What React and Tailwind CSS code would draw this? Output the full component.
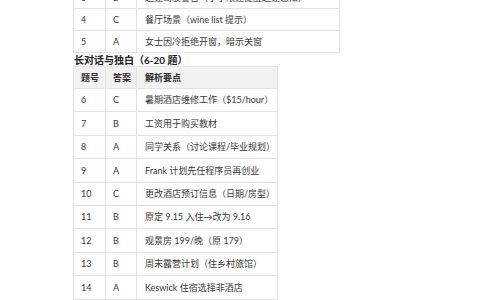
import React from 'react';

const topRows = [
  ['3', 'B', '超速驾驶警告（小于限速提醒超速感知）'],
  ['4', 'C', '餐厅场景（wine list 提示）'],
  ['5', 'A', '女士因冷拒绝开窗，暗示关窗'],
];

const longRows = [
  ['6', 'C', '暑期酒店维修工作（$15/hour）'],
  ['7', 'B', '工资用于购买教材'],
  ['8', 'A', '同学关系（讨论课程/毕业规划）'],
  ['9', 'A', 'Frank 计划先任程序员再创业'],
  ['10', 'C', '更改酒店预订信息（日期/房型）'],
  ['11', 'B', '原定 9.15 入住→改为 9.16'],
  ['12', 'B', '观景房 199/晚（原 179）'],
  ['13', 'B', '周末露营计划（住乡村旅馆）'],
  ['14', 'A', 'Keswick 住宿选择非酒店'],
];

function Row({ cells, height, header }) {
  return (
    <div
      className={`grid grid-cols-[32px_31px_1fr] border-b border-[#e3e3e3] ${height} ${
        header ? 'bg-[#f2f2f2] font-bold text-[#2a2a2a]' : ''
      }`}
    >
      <div className="flex items-center border-r border-[#e3e3e3] pl-[7px]">{cells[0]}</div>
      <div className="flex items-center border-r border-[#e3e3e3] pl-[7px]">{cells[1]}</div>
      <div className="flex items-center pl-[8px] whitespace-nowrap">{cells[2]}</div>
    </div>
  );
}

export default function App() {
  return (
    <div
      className="w-[484px] h-[300px] overflow-hidden bg-white text-[#383838] text-[9px]"
      style={{ fontFamily: 'Lato, "Noto Sans CJK SC", sans-serif' }}
    >
      {/* 短对话表格（续） */}
      <div className="ml-[73px] mt-[-13px] w-[267px] border-l border-r border-[#e3e3e3]">
        {topRows.map((r) => (
          <Row key={r[0]} cells={r} height="h-[22px]" />
        ))}
      </div>

      <div className="ml-[74px] h-[13px] text-[10px] font-bold leading-[14px] text-[#222]">
        长对话与独白（6-20 题）
      </div>

      <div className="ml-[73px] w-[205px] border-l border-r border-t border-[#e3e3e3]">
        <Row cells={['题号', '答案', '解析要点']} height="h-[22px]" header />
        {longRows.map((r) => (
          <Row key={r[0]} cells={r} height="h-[23.4px]" />
        ))}
      </div>
    </div>
  );
}
